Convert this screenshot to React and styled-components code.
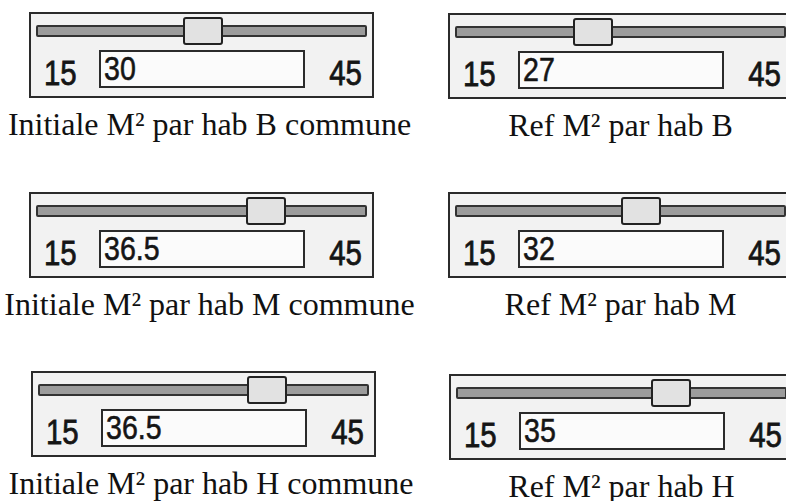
import React from "react";
import styled, { createGlobalStyle } from "styled-components";

const Global = createGlobalStyle`
  html, body { margin: 0; padding: 0; background: #ffffff; overflow: hidden; }
  body { width: 786px; height: 501px; }
`;

const Page = styled.div`
  display: grid;
  grid-template-columns: 345px 345px;
  column-gap: 74px;
  row-gap: 48px;
  padding: 12px 0 0 29px;
  width: 786px;
  box-sizing: border-box;
`;

const Cell = styled.div`
  display: flex;
  flex-direction: column;
  align-items: center;
  margin-top: ${(p) => p.$dy || 0}px;
  margin-left: ${(p) => p.$dx || 0}px;
`;

const Box = styled.div`
  width: 345px;
  height: 86px;
  box-sizing: border-box;
  border: 2px solid #2b2b2b;
  background: #f2f2f2;
  padding: 3px 5px 8px 5px;
  display: flex;
  flex-direction: column;
`;

const SliderArea = styled.div`
  position: relative;
  height: 28px;
  display: flex;
  align-items: center;
`;

const Track = styled.div`
  flex: 1;
  height: 12px;
  box-sizing: border-box;
  border: 2px solid #333;
  border-radius: 2px;
  background: #9c9c9c;
`;

const Thumb = styled.div`
  position: absolute;
  top: 0;
  width: 40px;
  height: 28px;
  box-sizing: border-box;
  border: 2px solid #222;
  border-radius: 3px;
  background: #e2e2e2;
`;

const ValueRow = styled.div`
  margin-top: 5px;
  height: 38px;
  display: grid;
  grid-template-columns: 63px 206px 1fr;
  align-items: end;
`;

const Num = styled.div`
  font-family: "Liberation Sans", Arial, sans-serif;
  font-size: 35px;
  line-height: 30px;
  color: #151515;
  -webkit-text-stroke: 0.8px #151515;
  padding-bottom: 0px;
  text-align: ${(p) => (p.$right ? "right" : "left")};
  padding-left: ${(p) => (p.$right ? 0 : 8)}px;
  padding-right: ${(p) => (p.$right ? 5 : 0)}px;
`;

const Narrow = styled.span`
  display: inline-block;
  transform: scaleX(0.84);
  transform-origin: ${(p) => (p.$right ? "right" : "left")} center;
`;

const Field = styled.div`
  height: 38px;
  box-sizing: border-box;
  border: 2px solid #2b2b2b;
  background: #fbfbfb;
  padding: 1px 0 0 3px;
  font-family: "Liberation Sans", Arial, sans-serif;
  font-size: 34px;
  line-height: 30px;
  color: #151515;
  -webkit-text-stroke: 0.6px #151515;
`;

const Caption = styled.div`
  margin-top: 7px;
  margin-left: ${(p) => p.$shift || 0}px;
  font-family: "Liberation Serif", "Times New Roman", serif;
  font-size: 32px;
  line-height: 38px;
  color: #111;
  white-space: nowrap;
`;

const MIN = 15;
const MAX = 45;

function SliderPanel({ value, label, shift, dx, dy }) {
  const frac = (parseFloat(value) - MIN) / (MAX - MIN);
  const left = 2 + frac * 290;
  return (
    <Cell $dx={dx} $dy={dy}>
      <Box>
        <SliderArea>
          <Track />
          <Thumb style={{ left: `${left}px` }} />
        </SliderArea>
        <ValueRow>
          <Num>
            <Narrow>15</Narrow>
          </Num>
          <Field>
            <Narrow>{value}</Narrow>
          </Field>
          <Num $right>
            <Narrow $right>45</Narrow>
          </Num>
        </ValueRow>
      </Box>
      <Caption $shift={shift}>{label}</Caption>
    </Cell>
  );
}

export default function App() {
  return (
    <>
      <Global />
      <Page>
        <SliderPanel value="30" label="Initiale M² par hab B commune" shift={16} />
        <SliderPanel value="27" label="Ref M² par hab B" dy={1} />
        <SliderPanel value="36.5" label="Initiale M² par hab M commune" shift={16} />
        <SliderPanel value="32" label="Ref M² par hab M" />
        <SliderPanel value="36.5" label="Initiale M² par hab H commune" shift={16} dx={3} />
        <SliderPanel value="35" label="Ref M² par hab H" dx={2} dy={3} />
      </Page>
    </>
  );
}
